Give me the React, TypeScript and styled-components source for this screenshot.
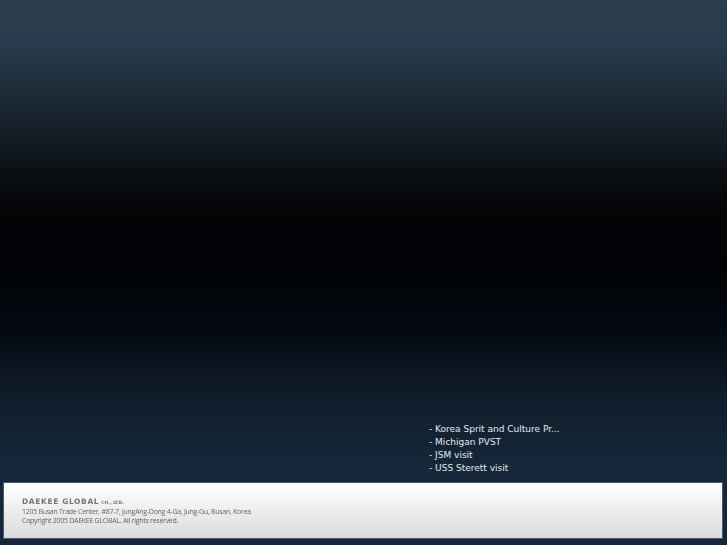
import React from "react";
import styled, { createGlobalStyle } from "styled-components";

const Global = createGlobalStyle`
  html, body { margin: 0; padding: 0; background: #000; }
`;

const Page = styled.div`
  width: 727px;
  height: 545px;
  overflow: hidden;
  display: flex;
  flex-direction: column;
  justify-content: flex-end;
  padding: 0 4px 6px 3px;
  box-sizing: border-box;
  background:
    repeating-conic-gradient(rgba(0,0,0,.07) 0 25%, transparent 0 50%) 0 0 / 2px 2px,
    linear-gradient(180deg, #2d3f50 0px, #2c3e50 30px, #26394a 60px, #202f3c 90px, #18232e 120px, #111820 150px, #0a0d11 180px, #020406 216px, #000206 270px, #040a12 330px, #0f1e2c 395px, #16293b 465px, #17293b 482px, #14283a 545px);
`;

const NewsList = styled.ul`
  list-style: none;
  margin: 0 0 7px 426px;
  padding: 0;
  font-family: "DejaVu Sans", sans-serif;
  font-size: 9px;
  line-height: 13px;
  color: #e6eaee;
`;

const NewsItem = styled.li`
  height: 13px;
  white-space: nowrap;
`;

const Footer = styled.footer`
  height: 57px;
  box-sizing: border-box;
  border: 1px solid #4b5c6c;
  background: linear-gradient(180deg, #ffffff 0%, #f4f5f6 30%, #e8e8e8 65%, #dcdcdc 100%);
  padding: 13px 0 0 18px;
`;

const Brand = styled.div`
  display: flex;
  align-items: baseline;
  gap: 2px;
  height: 11px;
  color: #717376;
  font-family: "DejaVu Sans", sans-serif;
  font-weight: 700;
  line-height: 11px;
  filter: blur(0.3px);
`;

const BrandName = styled.span`
  font-size: 7.5px;
  letter-spacing: 0.62px;
`;

const BrandSuffix = styled.span`
  font-size: 4.5px;
`;

const Address = styled.div`
  font-family: "Open Sans", sans-serif;
  font-size: 7px;
  line-height: 9px;
  color: #626467;
  letter-spacing: -0.27px;
  white-space: nowrap;
  filter: blur(0.3px);
`;

const items = ["Korea Sprit and Culture Pr...", "Michigan PVST", "JSM visit", "USS Sterett visit"];

export default function App() {
  return (
    <Page>
      <Global />
      <NewsList>
        {items.map((t) => (
          <NewsItem key={t}>- {t}</NewsItem>
        ))}
      </NewsList>
      <Footer>
        <Brand>
          <BrandName>DAEKEE GLOBAL</BrandName>
          <BrandSuffix>CO., LTD.</BrandSuffix>
        </Brand>
        <Address>
          1205 Busan Trade Center, #87-7, JungAng-Dong 4-Ga, Jung-Gu, Busan, Korea
          <br />
          Copyright 2005 DAEKEE GLOBAL. All rights reserved.
        </Address>
      </Footer>
    </Page>
  );
}
